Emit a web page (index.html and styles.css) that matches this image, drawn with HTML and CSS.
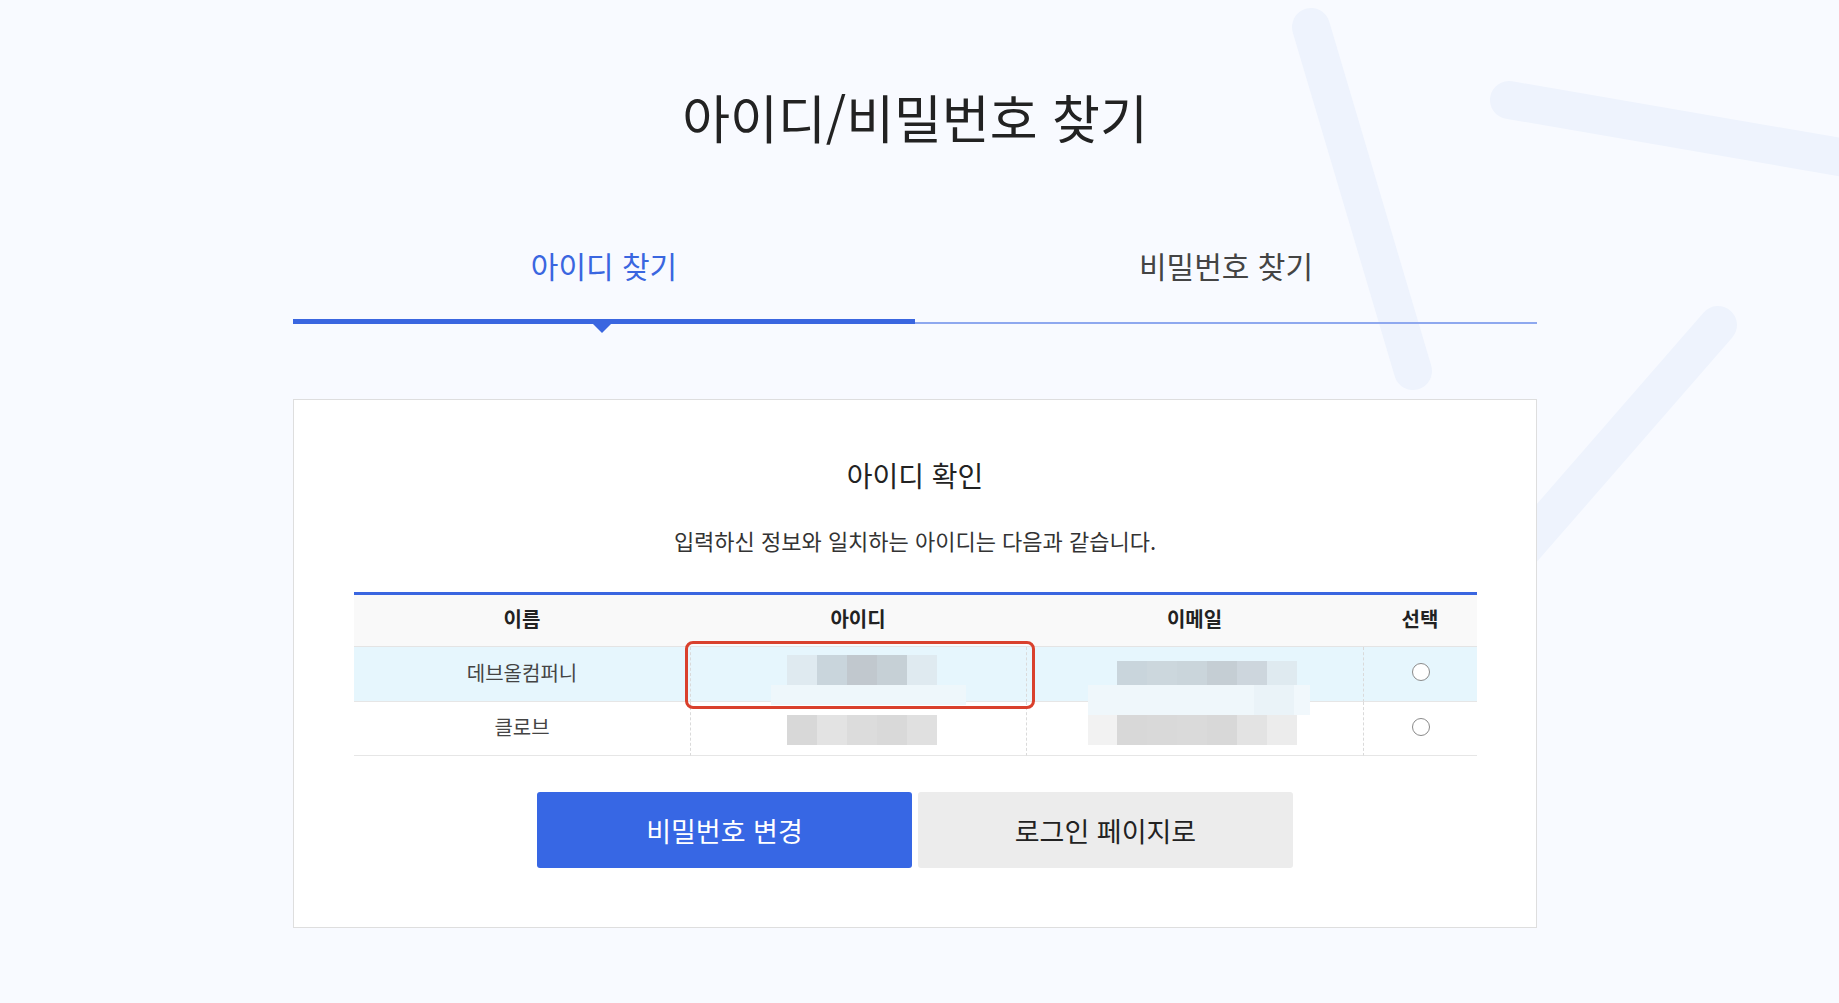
FILE: index.html
```html
<!DOCTYPE html>
<html lang="ko">
<head>
<meta charset="utf-8">
<title>아이디/비밀번호 찾기</title>
<link rel="stylesheet" href="styles.css">
</head>
<body>
<svg class="bg-deco" width="1839" height="1003" viewBox="0 0 1839 1003" aria-hidden="true">
  <g stroke="#eef3fd" stroke-width="38" stroke-linecap="round" fill="none">
    <line x1="1311" y1="27" x2="1413" y2="371"/>
    <line x1="1509" y1="100" x2="1950" y2="176"/>
    <line x1="1718" y1="325" x2="1400" y2="690"/>
  </g>
</svg>
<main class="page">
  <div class="container">
    <h1 class="title">아이디/비밀번호 찾기</h1>
    <nav class="tabs">
      <a class="tab tab-active">아이디 찾기</a>
      <a class="tab">비밀번호 찾기</a>
    </nav>
    <section class="card">
      <h2 class="card-title">아이디 확인</h2>
      <p class="card-desc">입력하신 정보와 일치하는 아이디는 다음과 같습니다.</p>
      <table class="result">
        <colgroup>
          <col class="col-name">
          <col class="col-id">
          <col class="col-email">
          <col class="col-select">
        </colgroup>
        <thead>
          <tr><th>이름</th><th>아이디</th><th>이메일</th><th>선택</th></tr>
        </thead>
        <tbody>
          <tr class="row-selected">
            <td>데브올컴퍼니</td>
            <td class="cell-mask">
              <span class="mask id-dark-1"></span>
              <span class="mask id-band-1"></span>
              <span class="highlight-box"></span>
            </td>
            <td class="cell-mask">
              <span class="mask email-dark-1"></span>
              <span class="mask email-band-1"></span>
            </td>
            <td><span class="radio"></span></td>
          </tr>
          <tr>
            <td>클로브</td>
            <td class="cell-mask">
              <span class="mask id-dark-2"></span>
            </td>
            <td class="cell-mask">
              <span class="mask email-dark-2"></span>
            </td>
            <td><span class="radio"></span></td>
          </tr>
        </tbody>
      </table>
      <div class="actions">
        <button class="btn btn-primary" type="button">비밀번호 변경</button>
        <button class="btn btn-gray" type="button">로그인 페이지로</button>
      </div>
    </section>
  </div>
</main>
</body>
</html>
```
FILE: styles.css
```css
* { box-sizing: border-box; }

html, body {
  margin: 0;
  padding: 0;
}

body {
  background: #f8faff;
  font-family: "Noto Sans CJK KR", "Noto Sans", sans-serif;
  color: #222;
  min-height: 1003px;
  position: relative;
  overflow: hidden;
}

.bg-deco {
  position: absolute;
  left: 0;
  top: 0;
  z-index: 0;
}

.page {
  position: relative;
  z-index: 1;
  width: 1830px;
}

.container {
  width: 1244px;
  margin: 0 auto;
}

.title {
  margin: 0;
  padding-top: 82px;
  font-size: 52px;
  line-height: 70px;
  font-weight: 400;
  text-align: center;
  color: #222;
}

.tabs {
  display: flex;
  align-items: flex-end;
  margin-top: 94px;
}

.tab {
  flex: 1;
  position: relative;
  text-align: center;
  font-size: 30px;
  line-height: 38px;
  color: #444;
  padding-bottom: 38px;
  border-bottom: 2px solid #8ea8ef;
}

.tab-active {
  color: #3a66e0;
  padding-bottom: 35px;
  border-bottom: 5px solid #3a66e0;
}

.tab-active::after {
  content: "";
  position: absolute;
  left: 50%;
  top: calc(100% + 5px);
  margin-left: -11px;
  border-left: 9px solid transparent;
  border-right: 9px solid transparent;
  border-top: 9px solid #3a66e0;
}

.card {
  margin-top: 75px;
  background: #fff;
  border: 1px solid #dedede;
  padding: 55px 60px 59px;
  text-align: center;
}

.card-title {
  margin: 0;
  font-size: 28px;
  line-height: 40px;
  font-weight: 400;
  color: #222;
}

.card-desc {
  margin: 30px 0 0;
  font-size: 22px;
  line-height: 30px;
  color: #333;
}

.result {
  width: 100%;
  margin-top: 37px;
  border-collapse: separate;
  border-spacing: 0;
  table-layout: fixed;
  border-top: 3px solid #3a66e0;
}

.col-name { width: 336px; }
.col-id { width: 336px; }
.col-email { width: 337px; }
.col-select { width: 114px; }

.result th {
  height: 52px;
  padding: 0 0 4px;
  background: #f9f9f9;
  font-size: 20px;
  font-weight: 700;
  color: #222;
  border-bottom: 1px solid #e4e4e4;
}

.result td {
  height: 55px;
  padding: 0 0 4px;
  font-size: 20px;
  color: #444;
  border-bottom: 1px solid #e6e6e6;
  position: relative;
}

.result tbody tr:last-child td {
  height: 54px;
}

.result td + td {
  border-left: 1px dashed #dadada;
}

.row-selected td {
  background: #e6f6fd;
}

.mask {
  position: absolute;
  display: block;
}

.id-dark-1 {
  left: 96px;
  top: 8px;
  width: 150px;
  height: 30px;
  background: linear-gradient(90deg, #dfeaf0 0 20%, #c9d5dc 20% 40%, #c1c8ce 40% 60%, #c6d0d6 60% 80%, #dfeaf0 80%);
}

.id-band-1 {
  left: 80px;
  top: 38px;
  width: 195px;
  height: 20px;
  background: #eef7fb;
  z-index: 2;
}

.id-dark-2 {
  left: 96px;
  top: 13px;
  width: 150px;
  height: 30px;
  background: linear-gradient(90deg, #d8d8d8 0 20%, #e3e3e3 20% 40%, #dcdcdc 40% 60%, #d9d9d9 60% 80%, #e0e0e0 80%);
}

.email-dark-1 {
  left: 90px;
  top: 14px;
  width: 180px;
  height: 24px;
  background: linear-gradient(90deg, #c9d5dc 0 16.66%, #ccd7dd 16.66% 33.33%, #cad5db 33.33% 50%, #c5ced4 50% 66.66%, #cdd6dd 66.66% 83.33%, #dfeaf0 83.33%);
}

.email-band-1 {
  left: 61px;
  top: 38px;
  width: 222px;
  height: 30px;
  background: linear-gradient(90deg, #eff7fb 0 75%, #eaf3f8 75% 93%, #f1f8fc 93%);
  z-index: 2;
}

.email-dark-2 {
  left: 61px;
  top: 13px;
  width: 209px;
  height: 30px;
  background: linear-gradient(90deg, #f2f2f2 0 14%, #d8d8d8 14% 28.3%, #d9d9d9 28.3% 42.6%, #dadada 42.6% 57%, #d8d8d8 57% 71.3%, #e3e3e3 71.3% 85.6%, #ececec 85.6%);
}

.highlight-box {
  position: absolute;
  left: -6px;
  top: -6px;
  width: 350px;
  height: 68px;
  border: 3px solid #d9402c;
  border-radius: 8px;
  z-index: 3;
}

.radio {
  display: block;
  width: 18px;
  height: 18px;
  margin: 0 auto;
  border: 1px solid #8a8a8a;
  border-radius: 50%;
  background: #fff;
}

.actions {
  display: flex;
  justify-content: center;
  gap: 6px;
  margin-top: 36px;
}

.btn {
  width: 375px;
  height: 76px;
  border: 0;
  border-radius: 3px;
  font-family: inherit;
  font-size: 27px;
  cursor: pointer;
}

.btn-primary {
  background: #3767e4;
  color: #fff;
}

.btn-gray {
  background: #ececec;
  color: #222;
}
```
